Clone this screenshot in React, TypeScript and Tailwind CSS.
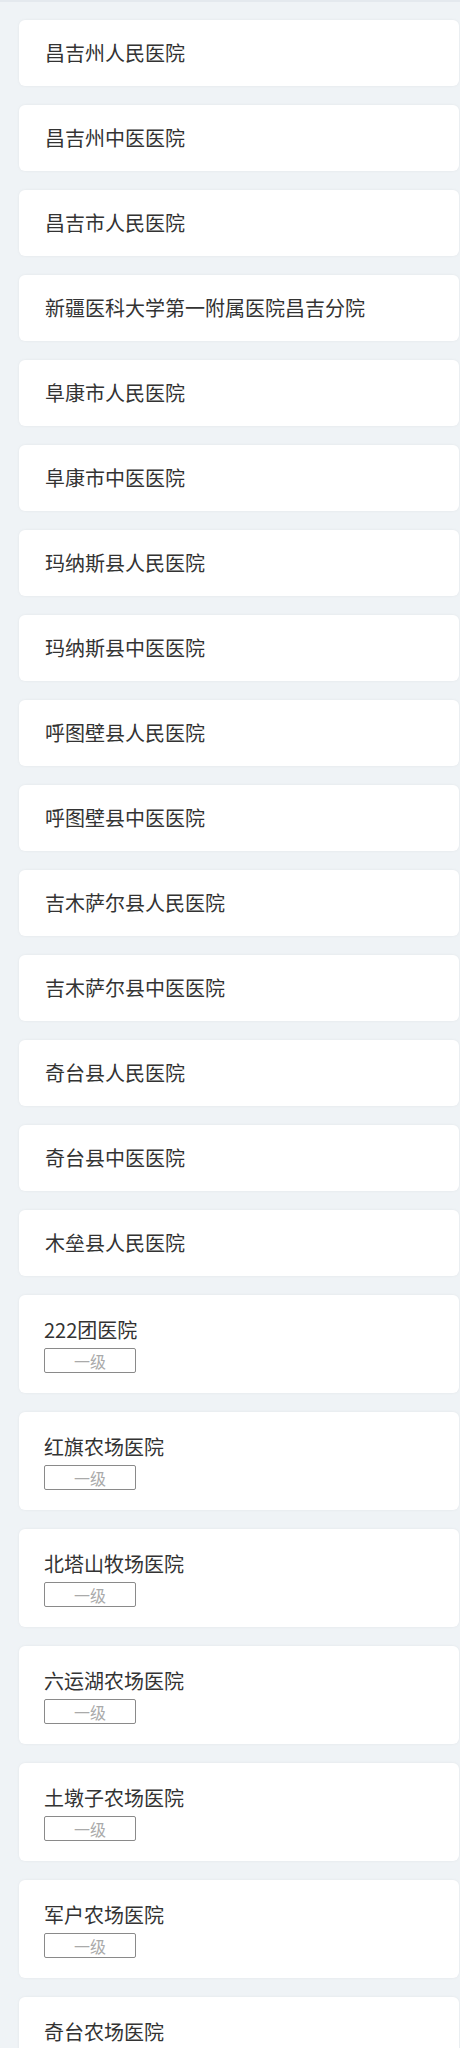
import React from "react";

const plain = [
  "昌吉州人民医院",
  "昌吉州中医医院",
  "昌吉市人民医院",
  "新疆医科大学第一附属医院昌吉分院",
  "阜康市人民医院",
  "阜康市中医医院",
  "玛纳斯县人民医院",
  "玛纳斯县中医医院",
  "呼图壁县人民医院",
  "呼图壁县中医医院",
  "吉木萨尔县人民医院",
  "吉木萨尔县中医医院",
  "奇台县人民医院",
  "奇台县中医医院",
  "木垒县人民医院",
];

const leveled = [
  "222团医院",
  "红旗农场医院",
  "北塔山牧场医院",
  "六运湖农场医院",
  "土墩子农场医院",
  "军户农场医院",
  "奇台农场医院",
];

export default function App() {
  return (
    <div
      className="min-h-[2048px] bg-[#eff3f6] border-t-2 border-[#e4e9ee] pt-[18px] pl-[19px] pr-px"
      style={{ fontFamily: '"Noto Sans CJK SC", "Noto Sans", sans-serif' }}
    >
      <div className="flex flex-col gap-[19px]">
        {plain.map((n) => (
          <div
            key={n}
            className="h-[66px] flex items-center bg-white rounded-[6px] pl-[26px] shadow-[0_0_3px_rgba(0,0,0,0.06)]"
          >
            <span className="text-[20px] leading-[24px] text-[#333333]">{n}</span>
          </div>
        ))}
        {leveled.map((n) => (
          <div
            key={n}
            className="h-[98px] flex flex-col items-start bg-white rounded-[6px] pl-[25px] pt-[23px] shadow-[0_0_3px_rgba(0,0,0,0.06)]"
          >
            <span className="text-[20px] leading-[24px] text-[#333333]">{n}</span>
            <span className="mt-[6px] w-[92px] h-[25px] flex items-center justify-center border border-[#8a8a8a] rounded-[2px] text-[16px] leading-none text-[#aaaaaa]">
              一级
            </span>
          </div>
        ))}
      </div>
    </div>
  );
}
